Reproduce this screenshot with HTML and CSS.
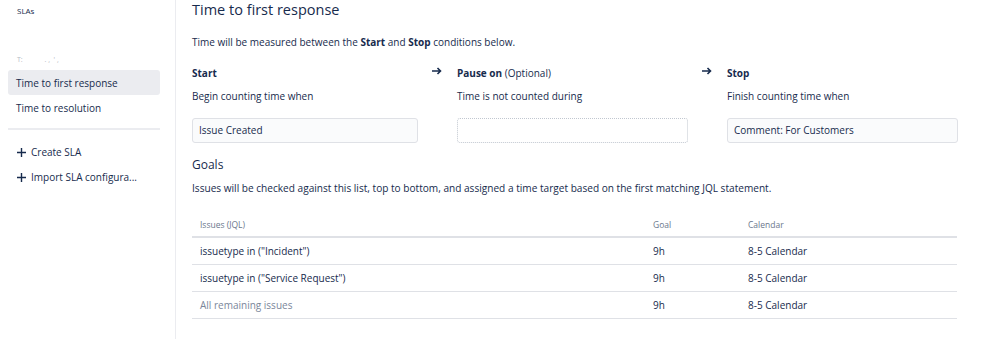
FILE: index.html
```html
<!DOCTYPE html>
<html lang="en">
<head>
    <meta charset="UTF-8">
    <title>SLAs</title>
    <link rel="stylesheet" href="styles.css">
</head>
<body>
    <div class="page">
        <aside class="sidebar">
            <div class="sidebar-title">SLAs</div>
            <div class="redacted">T:&nbsp;&nbsp;&nbsp;&nbsp;&nbsp;&nbsp;&nbsp;&nbsp;&nbsp;&nbsp;&nbsp;&nbsp;. ,&nbsp; ' ,</div>
            <ul class="nav">
                <li class="nav-item active">Time to first response</li>
                <li class="nav-item">Time to resolution</li>
            </ul>
            <ul class="nav actions">
                <li class="nav-item">
                    <svg class="plus" width="9" height="9" viewBox="0 0 9 9"><path d="M4.5 0v9M0 4.5h9" stroke="#172b4d" stroke-width="1.4"/></svg>Create SLA
                </li>
                <li class="nav-item">
                    <svg class="plus" width="9" height="9" viewBox="0 0 9 9"><path d="M4.5 0v9M0 4.5h9" stroke="#172b4d" stroke-width="1.4"/></svg>Import SLA configura...
                </li>
            </ul>
        </aside>

        <main class="main">
            <h1>Time to first response</h1>
            <p class="intro">Time will be measured between the <b>Start</b> and <b>Stop</b> conditions below.</p>

            <div class="conditions">
                <div class="cond">
                    <div class="cond-label"><b>Start</b></div>
                    <div class="cond-help">Begin counting time when</div>
                    <div class="field">Issue Created</div>
                </div>
                <div class="arrow">
                    <svg width="10" height="8" viewBox="0 0 10 8"><path d="M0 4h8.5M5.5 1l3 3-3 3" fill="none" stroke="#172b4d" stroke-width="1.6"/></svg>
                </div>
                <div class="cond">
                    <div class="cond-label"><b>Pause on</b> (Optional)</div>
                    <div class="cond-help">Time is not counted during</div>
                    <div class="field empty"></div>
                </div>
                <div class="arrow">
                    <svg width="10" height="8" viewBox="0 0 10 8"><path d="M0 4h8.5M5.5 1l3 3-3 3" fill="none" stroke="#172b4d" stroke-width="1.6"/></svg>
                </div>
                <div class="cond">
                    <div class="cond-label"><b>Stop</b></div>
                    <div class="cond-help">Finish counting time when</div>
                    <div class="field">Comment: For Customers</div>
                </div>
            </div>

            <h2>Goals</h2>
            <p class="goals-help">Issues will be checked against this list, top to bottom, and assigned a time target based on the first matching JQL statement.</p>

            <table class="goals">
                <thead>
                    <tr>
                        <th class="col-jql">Issues (JQL)</th>
                        <th class="col-goal">Goal</th>
                        <th>Calendar</th>
                    </tr>
                </thead>
                <tbody>
                    <tr>
                        <td>issuetype in ("Incident")</td>
                        <td>9h</td>
                        <td>8-5 Calendar</td>
                    </tr>
                    <tr>
                        <td>issuetype in ("Service Request")</td>
                        <td>9h</td>
                        <td>8-5 Calendar</td>
                    </tr>
                    <tr>
                        <td class="muted">All remaining issues</td>
                        <td>9h</td>
                        <td>8-5 Calendar</td>
                    </tr>
                </tbody>
            </table>
        </main>
    </div>
</body>
</html>
```

FILE: styles.css
```css
body {
    margin: 0;
    font-family: "Open Sans", "Noto Sans", sans-serif;
    color: #172b4d;
    background: #fff;
}
.page {
    display: flex;
    height: 339px;
}
.sidebar {
    width: 176px;
    flex-shrink: 0;
    border-right: 1px solid #ebecf0;
    box-sizing: border-box;
    padding: 0 15px 0 8px;
}
.sidebar-title {
    font-size: 8px;
    padding: 5px 0 0 9px;
    height: 40px;
}
.redacted {
    font-size: 7px;
    color: #b3bac5;
    padding: 5px 0 0 9px;
    height: 25px;
    line-height: 20px;
    box-sizing: border-box;
}
.nav {
    list-style: none;
    margin: 0;
    padding: 0;
}
.nav-item {
    font-size: 10px;
    height: 25px;
    line-height: 27px;
    padding-left: 8px;
    border-radius: 3px;
}
.nav-item.active {
    background: #ebecf0;
}
.actions {
    border-top: 2px solid #ebecf0;
    margin-top: 8px;
    padding-top: 9px;
}
.plus {
    margin: 0 5px 0 1px;
    vertical-align: -1px;
}
.main {
    padding-left: 16px;
    width: 766px;
}
h1 {
    font-size: 14.5px;
    font-weight: 400;
    margin: 0;
    line-height: 20px;
}
.intro {
    font-size: 10px;
    margin: 13px 0 0;
    line-height: 18px;
}
.conditions {
    display: flex;
    margin-top: 13px;
}
.cond {
    width: 231px;
    font-size: 10px;
}
.cond:first-child {
    width: 226px;
}
.cond-label {
    line-height: 18px;
}
.cond-help {
    margin-top: 5px;
    line-height: 18px;
}
.field {
    margin-top: 13px;
    height: 23px;
    line-height: 23px;
    border: 1px solid #dfe1e6;
    background: #fafbfc;
    border-radius: 3px;
    padding-left: 6px;
}
.field.empty {
    border: 1px dotted #c1c7d0;
    background: #fff;
}
.arrow {
    width: 39px;
    padding: 3px 0 0 14px;
    box-sizing: border-box;
}
.arrow svg {
    display: block;
}
h2 {
    font-size: 12px;
    font-weight: 400;
    margin: 13px 0 0;
    line-height: 18px;
}
.goals-help {
    font-size: 10.1px;
    margin: 5px 0 0;
    line-height: 18px;
}
.goals {
    width: 765px;
    border-collapse: collapse;
    margin-top: 15px;
    font-size: 10px;
}
.goals th {
    font-size: 8.5px;
    font-weight: 400;
    color: #6b778c;
    text-align: left;
    height: 24px;
    padding: 0 0 0 8px;
    border-bottom: 2px solid #dfe1e6;
}
.goals td {
    height: 26px;
    padding: 0 0 0 8px;
    border-bottom: 1px solid #dfe1e6;
}
.goals .col-jql {
    width: 445px;
}
.goals .col-goal {
    width: 87px;
}
.muted {
    color: #7a869a;
}
```
